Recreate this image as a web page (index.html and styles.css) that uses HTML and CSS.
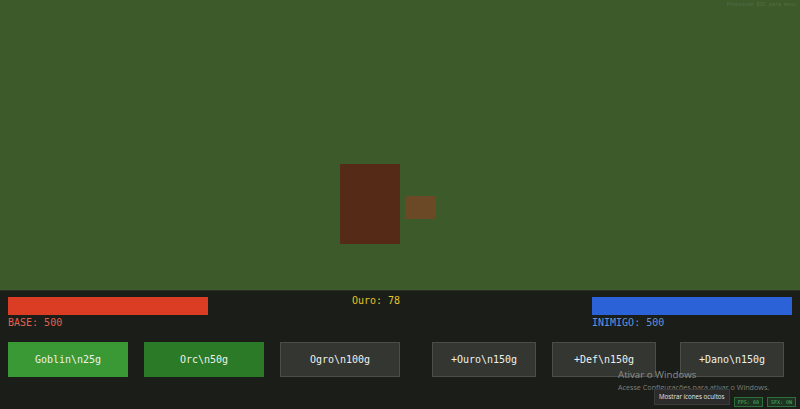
FILE: index.html
```html
<!DOCTYPE html>
<html>
<head>
    <title>Defesa da Base</title>
    <meta charset="UTF-8">
    <meta name="viewport" content="width=device-width, initial-scale=1.0">
    <link rel="stylesheet" href="styles.css">
</head>
<body>
    <div class="field">
        <div class="hint">Pressione ESC para menu</div>
        <div class="base"></div>
        <div class="crate"></div>
    </div>

    <div class="panel">
        <div class="stats">
            <div class="side">
                <div class="bar bar-base"></div>
                <div class="label label-base">BASE: 500</div>
            </div>
            <div class="gold">Ouro: 78</div>
            <div class="side">
                <div class="bar bar-enemy"></div>
                <div class="label label-enemy">INIMIGO: 500</div>
            </div>
        </div>
        <div class="actions">
            <div class="units">
                <button class="btn unit goblin">Goblin\n25g</button>
                <button class="btn unit orc">Orc\n50g</button>
                <button class="btn unit">Ogro\n100g</button>
            </div>
            <div class="upgrades">
                <button class="btn upgrade">+Ouro\n150g</button>
                <button class="btn upgrade">+Def\n150g</button>
                <button class="btn upgrade">+Dano\n150g</button>
            </div>
        </div>
    </div>

    <div class="activate">
        <div class="activate-title">Ativar o Windows</div>
        <div class="activate-sub">Acesse Configurações para ativar o Windows.</div>
    </div>
    <div class="tip">Mostrar ícones ocultos</div>
    <div class="toggles">
        <span class="toggle">FPS: 60</span>
        <span class="toggle">SFX: ON</span>
    </div>
</body>
</html>
```

FILE: styles.css
```css
body {
  margin: 0;
  width: 800px;
  height: 409px;
  overflow: hidden;
  background-color: #1b1d18;
  font-family: "DejaVu Sans Mono", monospace;
  font-size: 10px;
  position: relative;
}

.field {
  position: relative;
  height: 290px;
  background-color: #3d5a2b;
}

.hint {
  position: absolute;
  top: 1px;
  right: 4px;
  font-size: 5px;
  color: #55704a;
}

.base {
  position: absolute;
  left: 340px;
  top: 164px;
  width: 60px;
  height: 80px;
  background-color: #552a17;
}

.crate {
  position: absolute;
  left: 405px;
  top: 196px;
  width: 31px;
  height: 23px;
  background-color: #6b4826;
}

.panel {
  border-top: 1px solid #2c3028;
  padding: 6px 8px 0 8px;
}

.stats {
  display: flex;
  justify-content: space-between;
  height: 40px;
}

.bar {
  width: 200px;
  height: 18px;
}

.bar-base {
  background-color: #db3c24;
}

.bar-enemy {
  background-color: #2b62d7;
}

.label {
  margin-top: 2px;
  line-height: 12px;
}

.label-base {
  color: #e4604f;
}

.label-enemy {
  color: #5f95dc;
}

/* gold counter sits a bit left of the middle */
.gold {
  color: #e2c52a;
  line-height: 12px;
  margin-right: 48px;
  margin-top: -2px;
}

.actions {
  display: flex;
  margin-top: 5px;
}

.units,
.upgrades {
  display: flex;
  gap: 16px;
}

.upgrades {
  margin-left: 32px;
}

.upgrades .btn:last-child {
  margin-left: 8px;
}

.btn {
  height: 35px;
  border: 1px solid #4b4d49;
  background-color: #343632;
  color: #eef2ea;
  font-family: "DejaVu Sans Mono", monospace;
  font-size: 10px;
  padding: 0;
}

.unit {
  width: 120px;
}

.upgrade {
  width: 104px;
}

.goblin {
  background-color: #3b9935;
  border-color: #3b9935;
}

.orc {
  background-color: #2a7a27;
  border-color: #2a7a27;
}

.activate {
  position: absolute;
  left: 618px;
  top: 368px;
  color: #7d807a;
  font-family: "Open Sans", sans-serif;
}

.activate-title {
  font-size: 9.7px;
  line-height: 14px;
  color: #8c8f89;
}

.activate-sub {
  font-size: 7.2px;
  line-height: 10px;
}

.tip {
  position: absolute;
  left: 654px;
  top: 389px;
  padding: 2px 4px;
  background-color: #2b2b2b;
  border: 1px solid #3a3a3a;
  color: #e6e6e6;
  font-family: "Open Sans", sans-serif;
  font-size: 6.2px;
  line-height: 10px;
}

.toggles {
  position: absolute;
  right: 4px;
  bottom: 2px;
  display: flex;
  gap: 4px;
}

.toggle {
  padding: 0 3px;
  border: 1px solid #2f6e3c;
  background-color: #1d3322;
  color: #4fb560;
  font-size: 5px;
  line-height: 8px;
}
```
